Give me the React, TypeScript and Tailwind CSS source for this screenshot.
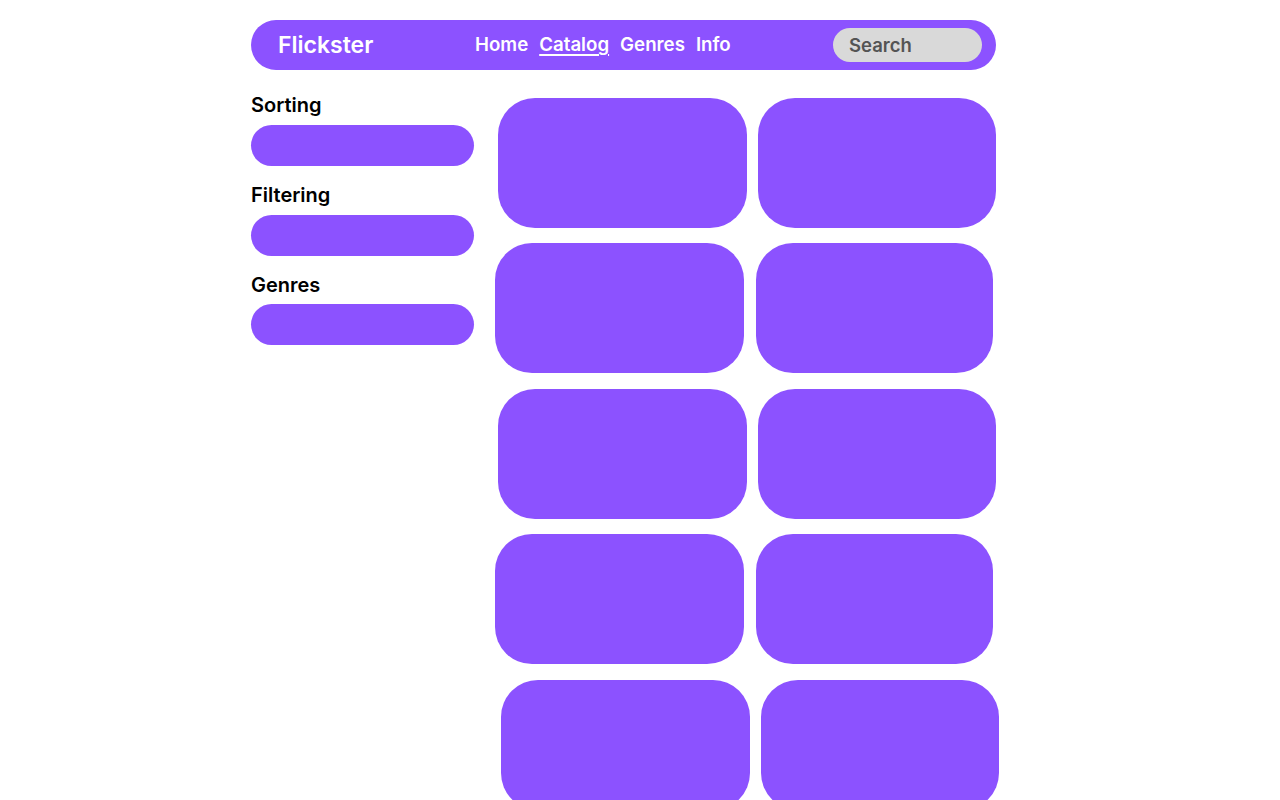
import React from "react";

const Card = ({ w }: { w: string }) => (
  <div className={`${w} h-[130px] shrink-0 rounded-[37px] bg-[#8c52ff]`} />
);

export default function App() {
  const font = { fontFamily: "Inter, 'Noto Sans', sans-serif" };
  return (
    <div className="min-h-[800px] bg-white overflow-hidden" style={font}>
      <div className="ml-[251px] w-[745px] pt-[20px]">
        <header className="h-[50px] rounded-full bg-[#8c52ff] flex items-center pl-[27px] pr-[14px]">
          <div className="text-white font-semibold text-[23px] leading-none w-[197px]">Flickster</div>
          <nav className="flex items-center gap-[11px] text-white font-semibold text-[18.7px] leading-none mt-[1px]">
            <span>Home</span>
            <span className="underline underline-offset-[3px] decoration-[1.5px]">Catalog</span>
            <span>Genres</span>
            <span>Info</span>
          </nav>
          <div className="ml-auto h-[34px] w-[149px] rounded-full bg-[#d9d9d9] flex items-center pl-[16px] text-[#545454] font-semibold text-[18.5px] leading-none">
            Search
          </div>
        </header>
        <div className="flex mt-[28px]">
          <aside className="w-[223px] shrink-0 flex flex-col">
            <div className="text-black font-semibold text-[20px] leading-[20px] -mt-[3px] h-[30px]">Sorting</div>
            <div className="h-[41px] rounded-full bg-[#8c52ff]" />
            <div className="text-black font-semibold text-[20px] leading-[20px] mt-[19px] h-[30px]">Filtering</div>
            <div className="h-[41px] rounded-full bg-[#8c52ff]" />
            <div className="text-black font-semibold text-[20px] leading-[20px] mt-[19px] h-[29px]">Genres</div>
            <div className="h-[41px] rounded-full bg-[#8c52ff]" />
          </aside>
          <main className="ml-[21px] flex flex-col">
            <div className="flex gap-[11px] ml-[3px]">
              <Card w="w-[249px]" />
              <Card w="w-[238px]" />
            </div>
            <div className="flex gap-[12px] mt-[15px]">
              <Card w="w-[249px]" />
              <Card w="w-[237px]" />
            </div>
            <div className="flex gap-[11px] ml-[3px] mt-[16px]">
              <Card w="w-[249px]" />
              <Card w="w-[238px]" />
            </div>
            <div className="flex gap-[12px] mt-[15px]">
              <Card w="w-[249px]" />
              <Card w="w-[237px]" />
            </div>
            <div className="flex gap-[11px] ml-[6px] mt-[16px]">
              <Card w="w-[249px]" />
              <Card w="w-[238px]" />
            </div>
          </main>
        </div>
      </div>
    </div>
  );
}
